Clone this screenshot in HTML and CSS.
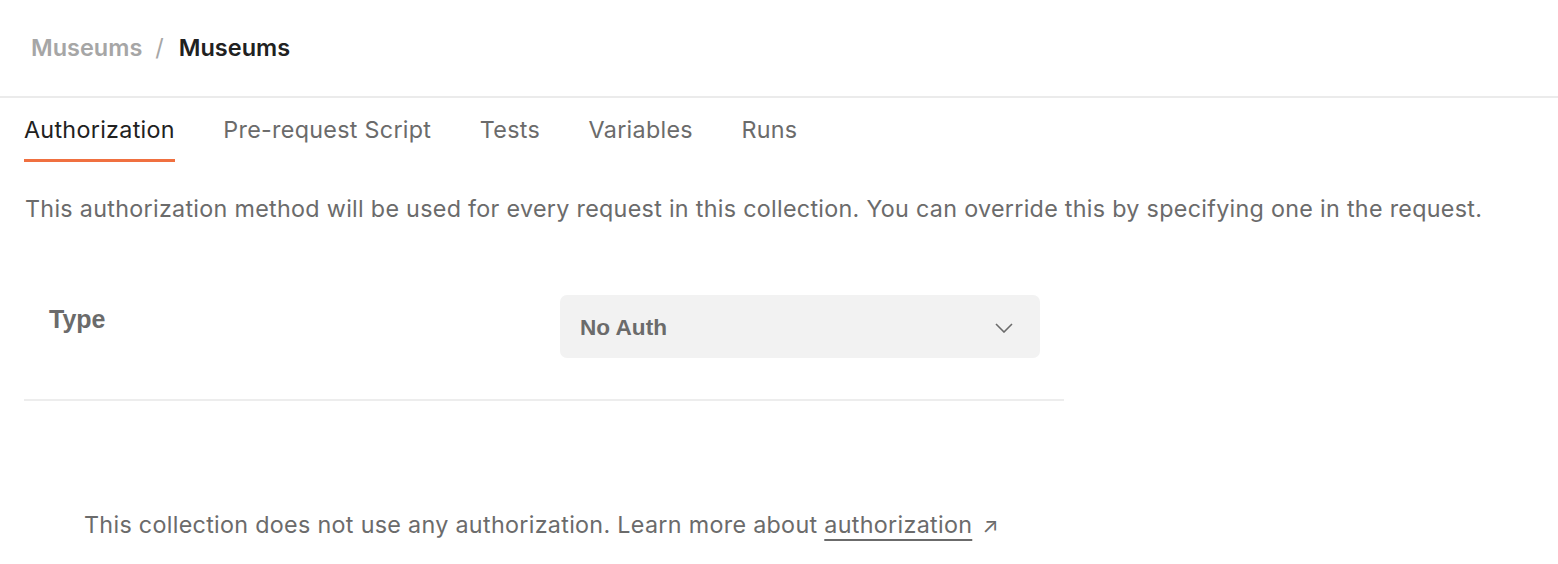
FILE: index.html
```html
<!DOCTYPE html>
<html>
<head>
<meta charset="utf-8">
<link rel="stylesheet" href="styles.css">
</head>
<body>
<div class="page">
  <header class="header">
    <nav class="crumbs">
      <span class="crumb-parent">Museums</span>
      <span class="crumb-sep">/</span>
      <span class="crumb-current">Museums</span>
    </nav>
  </header>
  <div class="tabs">
    <div class="tab active">Authorization</div>
    <div class="tab">Pre-request Script</div>
    <div class="tab">Tests</div>
    <div class="tab">Variables</div>
    <div class="tab">Runs</div>
  </div>
  <p class="desc">This authorization method will be used for every request in this collection. You can override this by specifying one in the request.</p>
  <div class="auth-row">
    <div class="type-label">Type</div>
    <div class="select">
      <span class="select-value">No Auth</span>
      <svg class="chevron" width="18" height="10" viewBox="0 0 18 10"><path d="M1 1 L9 9 L17 1" fill="none" stroke="#6b6b6b" stroke-width="1.6"/></svg>
    </div>
  </div>
  <p class="note">This collection does not use any authorization. Learn more about <a class="link">authorization</a><span class="arrow">↗</span></p>
</div>
</body>
</html>
```
FILE: styles.css
```css
html, body {
  margin: 0;
  padding: 0;
  background: #ffffff;
}
body {
  font-family: Inter, "Noto Sans", sans-serif;
  color: #6b6b6b;
}
.page {
  width: 1558px;
  height: 564px;
  overflow: hidden;
}
.header {
  height: 98px;
  border-bottom: 2px solid #ebebeb;
  display: flex;
  align-items: center;
  padding-left: 31px;
  box-sizing: border-box;
}
.crumbs {
  display: flex;
  align-items: center;
  gap: 13px;
  font-size: 23.5px;
  font-weight: 600;
  margin-top: -2px;
}
.crumb-parent { color: #a6a6a6; }
.crumb-sep { color: #a6a6a6; font-weight: 400; margin-right: 2px; }
.crumb-current { color: #212121; }
.tabs {
  display: flex;
  gap: 48.5px;
  padding-left: 24px;
  height: 64px;
}
.tab {
  font-size: 23.3px;
  letter-spacing: 0.3px;
  color: #6b6b6b;
  display: flex;
  align-items: center;
  height: 61px;
  box-sizing: border-box;
  padding-top: 2px;
}
.tab.active {
  color: #212121;
  border-bottom: 3px solid #f07040;
  height: 64px;
}
.desc {
  margin: 32px 0 0 25px;
  font-size: 23.3px;
  letter-spacing: 0.3px;
  line-height: 30px;
}
.auth-row {
  display: flex;
  margin: 71px 0 0 24px;
  width: 1040px;
  height: 106px;
  border-bottom: 2px solid #ededed;
  box-sizing: border-box;
}
.type-label {
  font-family: "Liberation Sans", Arial, sans-serif;
  font-weight: 700;
  font-size: 25px;
  line-height: 30px;
  color: #6b6b6b;
  width: 536px;
  padding-left: 25px;
  padding-top: 9px;
  box-sizing: border-box;
}
.select {
  width: 480px;
  height: 63px;
  background: #f2f2f2;
  border-radius: 7px;
  display: flex;
  align-items: center;
  justify-content: space-between;
  padding: 2px 27px 0 20px;
  box-sizing: border-box;
}
.select-value {
  font-family: "Liberation Sans", Arial, sans-serif;
  font-weight: 700;
  font-size: 22.6px;
  color: #6b6b6b;
}
.note {
  margin: 109px 0 0 84px;
  font-size: 23.3px;
  letter-spacing: 0.31px;
  line-height: 30px;
}
.link {
  color: #6b6b6b;
  text-decoration: underline;
  text-underline-offset: 6px;
  text-decoration-thickness: 2px;
}
.arrow {
  margin-left: 10px;
  font-size: 21px;
}
```
